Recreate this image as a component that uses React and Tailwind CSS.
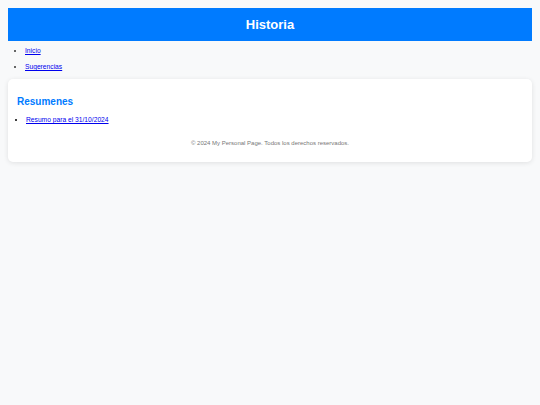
import React from 'react';

const App = () => {
  return (
    <div className="min-h-screen bg-[#f8f9fa] p-[8px] font-['Liberation_Sans',Arial,sans-serif]">
      <header className="h-[33px] bg-[#007bff] flex items-center justify-center">
        <h1 className="text-[13px] font-bold text-white leading-none">Historia</h1>
      </header>

      <ul className="list-disc pl-[17px] mt-[2px] text-[6.7px] leading-[16px] marker:text-[#333]">
        <li>
          <a href="#" className="text-[#0000ee] underline">Inicio</a>
        </li>
        <li>
          <a href="#" className="text-[#0000ee] underline">Sugerencias</a>
        </li>
      </ul>

      <section className="mt-[4px] bg-white rounded-[5px] shadow-[0_1px_5px_rgba(0,0,0,0.1)] px-[9px] pt-[17px] pb-[15px]">
        <h2 className="text-[10px] font-bold text-[#007bff] leading-[12px]">Resumenes</h2>
        <ul className="list-disc pl-[9px] mt-[7px] text-[6.7px] leading-[9px]">
          <li>
            <a href="#" className="text-[#0000ee] underline">Resumo para el 31/10/2024</a>
          </li>
        </ul>
        <footer className="mt-[15px] text-center text-[6px] leading-[8px] text-[#777]">
          © 2024 My Personal Page. Todos los derechos reservados.
        </footer>
      </section>
    </div>
  );
};

export default App;
